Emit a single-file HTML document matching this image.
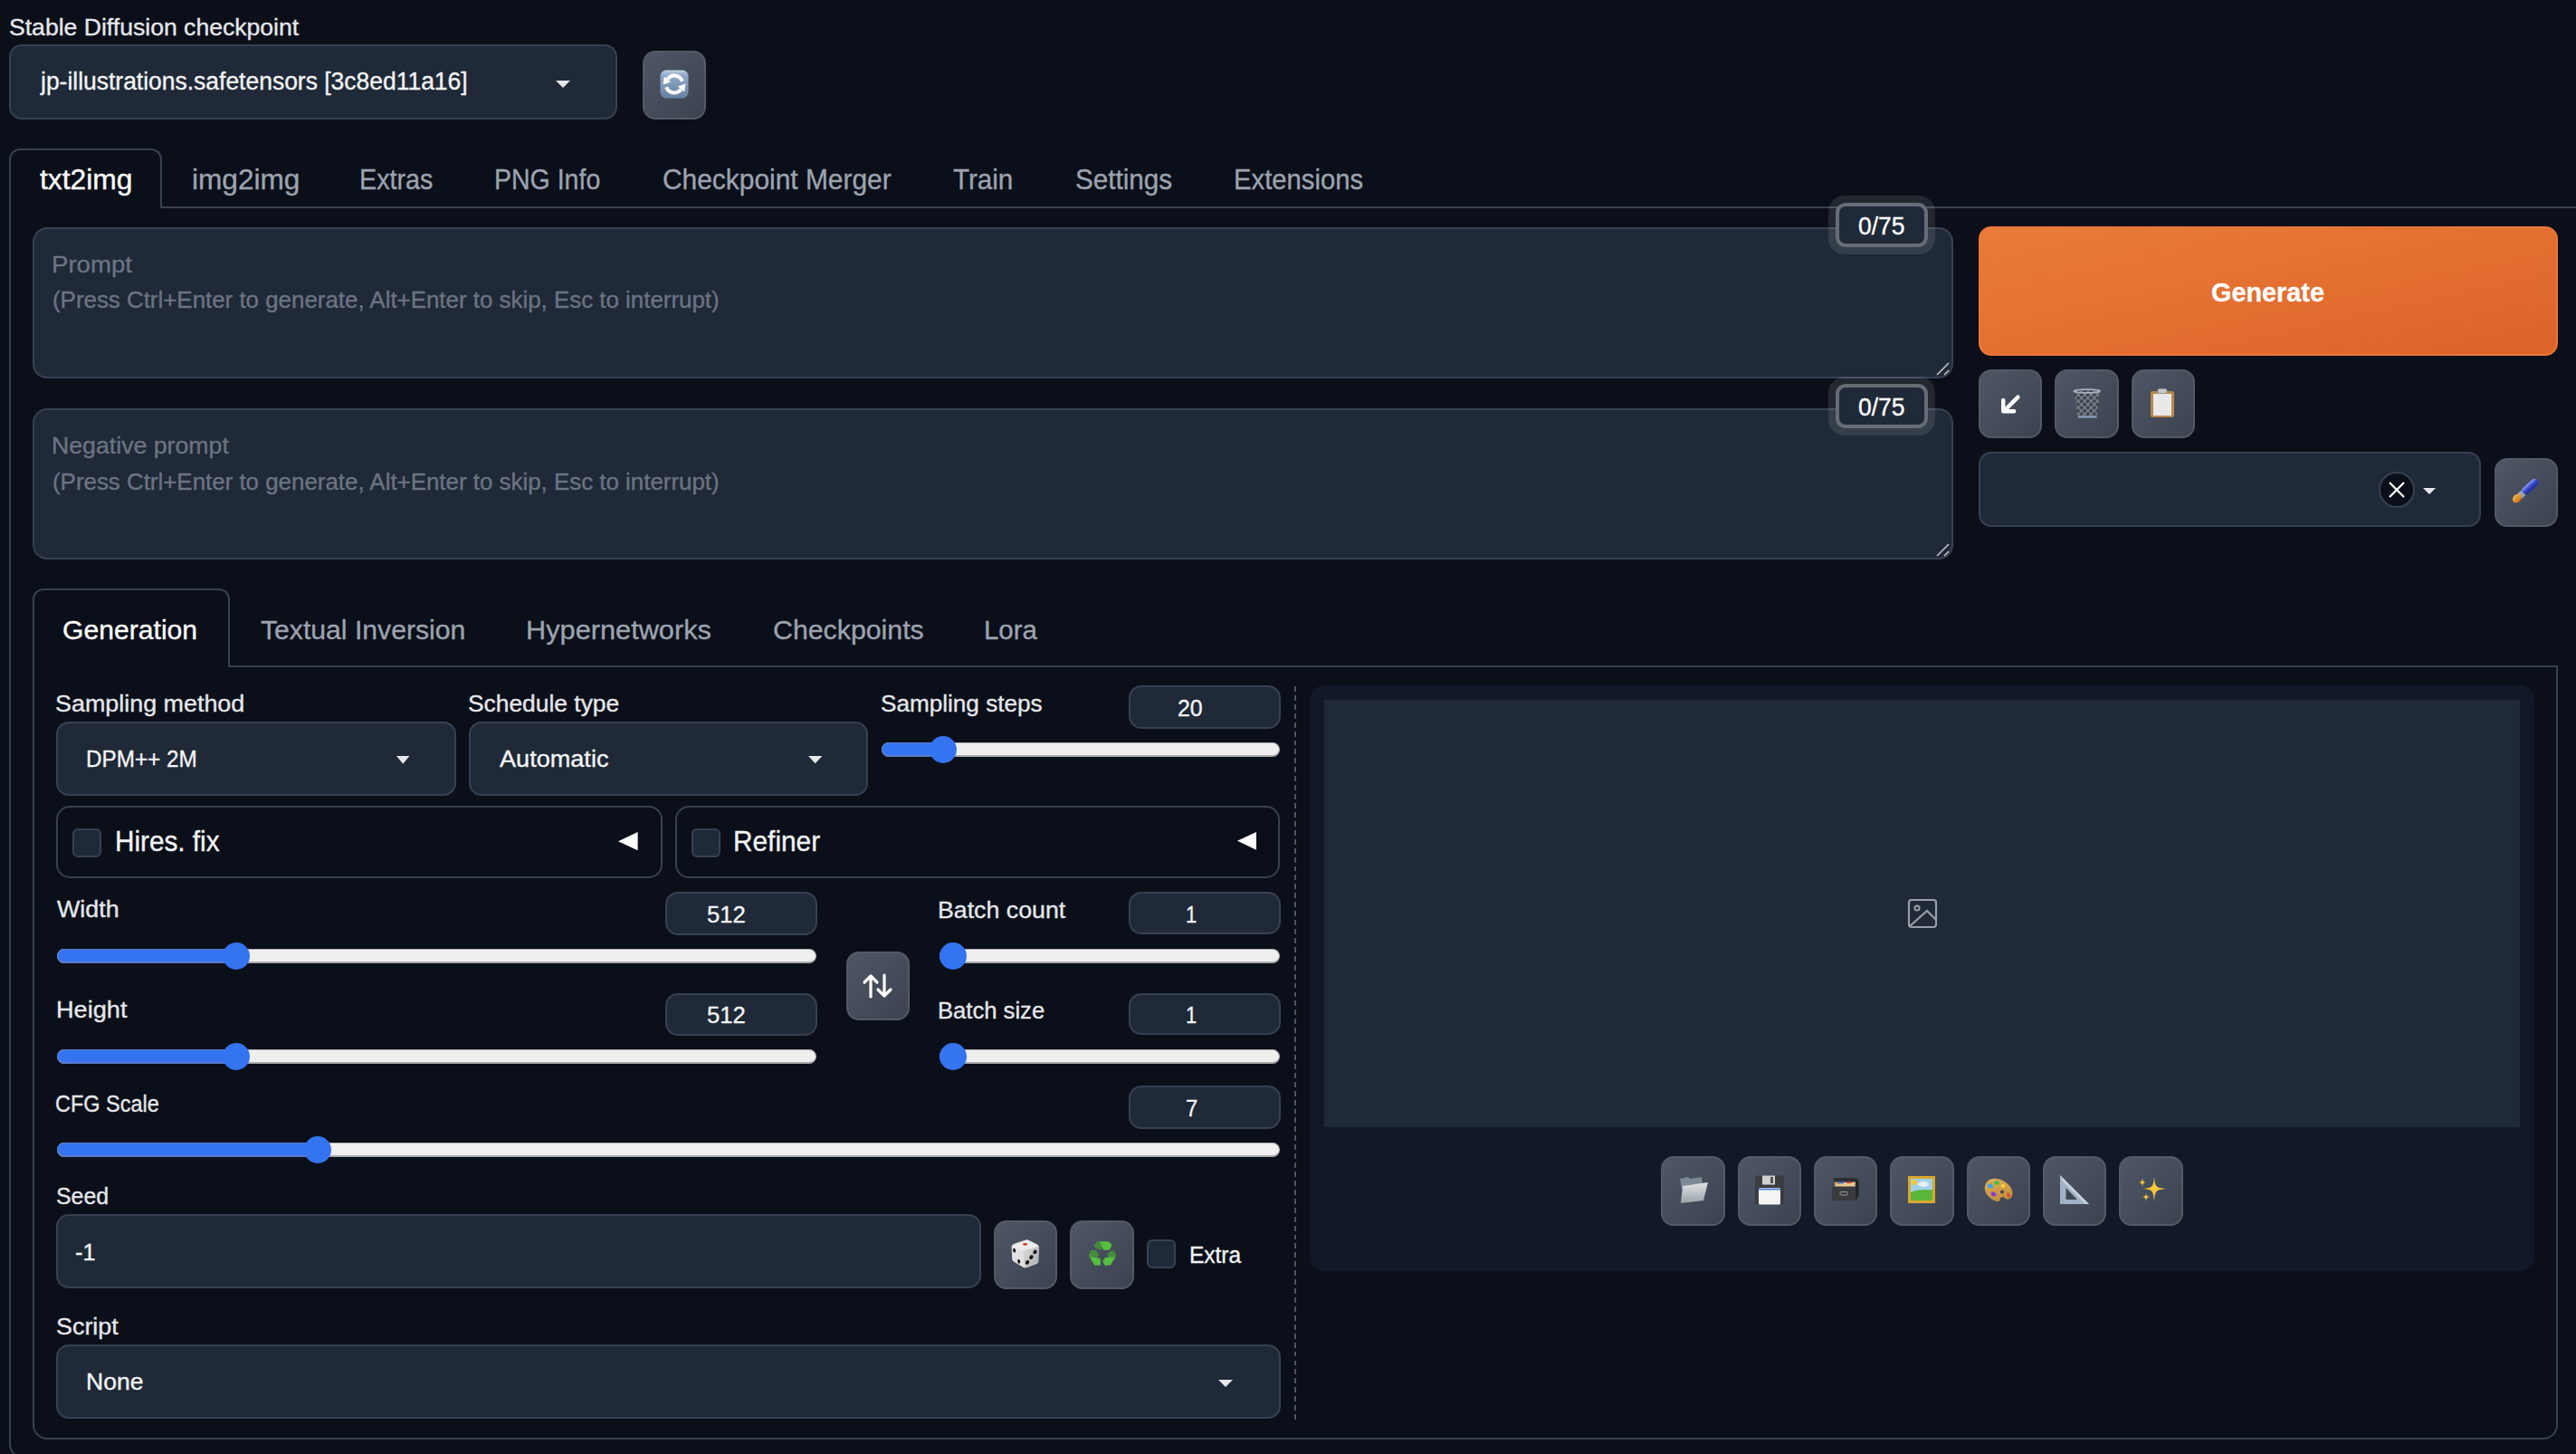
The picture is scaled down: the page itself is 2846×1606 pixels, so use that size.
<!DOCTYPE html>
<html><head><meta charset="utf-8"><title>Stable Diffusion</title>
<style>
html,body{margin:0;padding:0;background:#0b0f19;width:2846px;height:1606px;overflow:hidden;}
body{position:relative;font-family:"Liberation Sans",sans-serif;}
.a{position:absolute;box-sizing:border-box;}
.t{position:absolute;white-space:pre;line-height:1;-webkit-text-stroke:0.35px currentColor;}
</style></head><body>
<div class="t" id="t0" style="left:10.00px;top:16.57px;font-size:26.5px;color:#e5e7eb;transform:scaleX(1.0032);transform-origin:0 0;">Stable Diffusion checkpoint</div>
<div class="a" style="left:10.0px;top:49.0px;width:672.0px;height:82.5px;background:#1f2937;border:2px solid #374151;border-radius:14px;"></div>
<div class="t" id="t1" style="left:44.99px;top:77.31px;font-size:26.8px;color:#f3f4f6;transform:scaleX(0.9874);transform-origin:0 0;">jp-illustrations.safetensors [3c8ed11a16]</div>
<svg class="a" style="left:614.0px;top:89.0px" width="16" height="8" viewBox="0 0 16 8"><polygon points="0,0 16,0 8.0,8" fill="#e5e7eb"/></svg>
<div class="a" style="left:710.0px;top:56.0px;width:70.0px;height:76.0px;background:linear-gradient(to bottom right,#4f5665,#3b4250);border:2px solid #535a66;border-radius:14px;"></div>
<svg class="a" style="left:729.0px;top:77.0px" width="32" height="32" viewBox="0 0 32 32">
<defs><linearGradient id="rg" x1="0" y1="0" x2="0" y2="1"><stop offset="0" stop-color="#c3d2e4"/><stop offset="0.18" stop-color="#8fa8c8"/><stop offset="1" stop-color="#66829f"/></linearGradient></defs>
<rect x="0.5" y="0.5" width="31" height="31" rx="6.5" fill="url(#rg)"/>
<path d="M24.9 12.75 A9.5 9.5 0 0 0 8.6 10.2" stroke="#fff" stroke-width="4" fill="none"/>
<polygon points="3.6,16.6 4.8,7.4 12.2,13.6" fill="#fff"/>
<path d="M7.1 19.25 A9.5 9.5 0 0 0 23.4 21.8" stroke="#fff" stroke-width="4" fill="none"/>
<polygon points="28.4,15.4 19.8,18.4 27.2,24.6" fill="#fff"/>
</svg>
<div class="a" style="left:10.0px;top:228.0px;width:2890.0px;height:1383.0px;border:2px solid #374151;border-radius:0 0 16px 16px;"></div>
<div class="a" style="left:10.0px;top:164.0px;width:169.0px;height:66.0px;background:#0b0f19;border:2px solid #374151;border-radius:12px 12px 0 0;border-bottom:none;"></div>
<div class="t" id="t2" style="left:44.47px;top:183.48px;font-size:30.5px;color:#ffffff;transform:scaleX(1.0418);transform-origin:0 0;">txt2img</div>
<div class="t" id="t3" style="left:211.93px;top:183.48px;font-size:30.5px;color:#9ca3af;transform:scaleX(1.0357);transform-origin:0 0;">img2img</div>
<div class="t" id="t4" style="left:397.12px;top:183.48px;font-size:30.5px;color:#9ca3af;transform:scaleX(0.9406);transform-origin:0 0;">Extras</div>
<div class="t" id="t5" style="left:545.67px;top:183.48px;font-size:30.5px;color:#9ca3af;transform:scaleX(0.9346);transform-origin:0 0;">PNG Info</div>
<div class="t" id="t6" style="left:731.53px;top:183.48px;font-size:30.5px;color:#9ca3af;transform:scaleX(0.9805);transform-origin:0 0;">Checkpoint Merger</div>
<div class="t" id="t7" style="left:1052.51px;top:183.48px;font-size:30.5px;color:#9ca3af;transform:scaleX(0.9699);transform-origin:0 0;">Train</div>
<div class="t" id="t8" style="left:1188.04px;top:183.48px;font-size:30.5px;color:#9ca3af;transform:scaleX(0.9722);transform-origin:0 0;">Settings</div>
<div class="t" id="t9" style="left:1363.08px;top:183.48px;font-size:30.5px;color:#9ca3af;transform:scaleX(0.9590);transform-origin:0 0;">Extensions</div>
<div class="a" style="left:36.0px;top:250.5px;width:2122.0px;height:167.0px;background:#1f2937;border:2px solid #374151;border-radius:16px;"></div>
<div class="t" id="t10" style="left:56.88px;top:278.99px;font-size:26px;color:#6c7384;transform:scaleX(1.0611);transform-origin:0 0;">Prompt</div>
<div class="t" id="t11" style="left:57.98px;top:319.41px;font-size:25.5px;color:#6c7384;transform:scaleX(1.0152);transform-origin:0 0;">(Press Ctrl+Enter to generate, Alt+Enter to skip, Esc to interrupt)</div>
<svg class="a" style="left:2138.0px;top:399.5px" width="18" height="16" viewBox="0 0 18 16"><line x1="2" y1="14" x2="15" y2="1" stroke="#bfc3c9" stroke-width="1.6"/><line x1="10" y1="14" x2="15" y2="9" stroke="#bfc3c9" stroke-width="1.6"/></svg>
<div class="a" style="left:36.0px;top:451.0px;width:2122.0px;height:167.0px;background:#1f2937;border:2px solid #374151;border-radius:16px;"></div>
<div class="t" id="t12" style="left:56.95px;top:479.49px;font-size:26px;color:#6c7384;transform:scaleX(1.0265);transform-origin:0 0;">Negative prompt</div>
<div class="t" id="t13" style="left:57.98px;top:519.91px;font-size:25.5px;color:#6c7384;transform:scaleX(1.0152);transform-origin:0 0;">(Press Ctrl+Enter to generate, Alt+Enter to skip, Esc to interrupt)</div>
<svg class="a" style="left:2138.0px;top:600.0px" width="18" height="16" viewBox="0 0 18 16"><line x1="2" y1="14" x2="15" y2="1" stroke="#bfc3c9" stroke-width="1.6"/><line x1="10" y1="14" x2="15" y2="9" stroke="#bfc3c9" stroke-width="1.6"/></svg>
<div class="a" style="left:2020.0px;top:216.0px;width:118.0px;height:65.0px;background:rgba(255,255,255,0.1);border-radius:18px;"></div>
<div class="a" style="left:2028.0px;top:224.0px;width:102.0px;height:49.0px;background:#1f2937;border:4px solid #676d77;border-radius:11px;"></div>
<div class="t" id="t14" style="left:2053.02px;top:236.54px;font-size:27px;color:#ffffff;transform:scaleX(0.9804);transform-origin:0 0;">0/75</div>
<div class="a" style="left:2020.0px;top:416.0px;width:118.0px;height:65.0px;background:rgba(255,255,255,0.1);border-radius:18px;"></div>
<div class="a" style="left:2028.0px;top:424.0px;width:102.0px;height:49.0px;background:#1f2937;border:4px solid #676d77;border-radius:11px;"></div>
<div class="t" id="t15" style="left:2053.02px;top:436.54px;font-size:27px;color:#ffffff;transform:scaleX(0.9804);transform-origin:0 0;">0/75</div>
<div class="a" style="left:2186.0px;top:250.0px;width:640.0px;height:143.0px;background:linear-gradient(to bottom right,#e97c39,#dd6329);border:2px solid #e8773a;border-radius:14px;"></div>
<div class="t" id="t16" style="left:2443.04px;top:307.61px;font-size:30px;color:#ffffff;font-weight:bold;transform:scaleX(0.9610);transform-origin:0 0;">Generate</div>
<div class="a" style="left:2186.0px;top:408.0px;width:70.0px;height:76.0px;background:linear-gradient(to bottom right,#4f5665,#3b4250);border:2px solid #535a66;border-radius:14px;"></div>
<div class="a" style="left:2270.0px;top:408.0px;width:70.5px;height:76.0px;background:linear-gradient(to bottom right,#4f5665,#3b4250);border:2px solid #535a66;border-radius:14px;"></div>
<div class="a" style="left:2355.0px;top:408.0px;width:69.5px;height:76.0px;background:linear-gradient(to bottom right,#4f5665,#3b4250);border:2px solid #535a66;border-radius:14px;"></div>
<svg class="a" style="left:2207.0px;top:429.0px" width="30" height="30" viewBox="0 0 30 30"><path d="M22.4 9.6 L7.5 24.5" stroke="#fff" stroke-width="4.4" stroke-linecap="round"/><path d="M6.2 13 L6.2 25.2 L18.2 25.2" stroke="#fff" stroke-width="4.4" fill="none" stroke-linecap="round" stroke-linejoin="round"/></svg>
<svg class="a" style="left:2289.0px;top:429.0px" width="34" height="34" viewBox="0 0 34 34">
<defs><pattern id="mesh" width="5" height="5" patternUnits="userSpaceOnUse" patternTransform="rotate(45)"><rect width="5" height="5" fill="none" stroke="#8d959e" stroke-width="1.1"/></pattern></defs>
<path d="M2.5 3 L31 3 L27.5 32 L6.5 32 Z" fill="#3a414c"/>
<path d="M2.5 3 L31 3 L27.5 32 L6.5 32 Z" fill="url(#mesh)"/>
<ellipse cx="16.7" cy="3" rx="14.3" ry="1.8" fill="none" stroke="#a9b2bc" stroke-width="1.8"/>
<path d="M6.5 31.5 L27.5 31.5" stroke="#8fa6c2" stroke-width="2"/>
</svg>
<svg class="a" style="left:2374.0px;top:428.0px" width="30" height="34" viewBox="0 0 30 34">
<rect x="2" y="4" width="26" height="29" rx="2" fill="#b9874e"/>
<rect x="5" y="7" width="20" height="24" fill="#e9e9e9"/>
<rect x="10" y="1.5" width="10" height="5" rx="1.5" fill="#c7c9cc" stroke="#8e9196" stroke-width="1"/>
</svg>
<div class="a" style="left:2186.0px;top:499.0px;width:555.0px;height:82.5px;background:#1f2937;border:2px solid #374151;border-radius:14px;"></div>
<div class="a" style="left:2628.0px;top:521.0px;width:40.0px;height:40.0px;background:#0b0f19;border:2px solid #374151;border-radius:50%;"></div>
<svg class="a" style="left:2638.0px;top:531.0px" width="20" height="20" viewBox="0 0 20 20"><path d="M2 2 L18 18 M18 2 L2 18" stroke="#fff" stroke-width="2.3"/></svg>
<svg class="a" style="left:2676.5px;top:539.0px" width="14.0" height="7" viewBox="0 0 14.0 7"><polygon points="0,0 14.0,0 7.0,7" fill="#e5e7eb"/></svg>
<div class="a" style="left:2756.0px;top:506.0px;width:70.0px;height:75.5px;background:linear-gradient(to bottom right,#4f5665,#3b4250);border:2px solid #535a66;border-radius:14px;"></div>
<svg class="a" style="left:2772.0px;top:524.0px" width="36" height="36" viewBox="0 0 36 36">
<defs><linearGradient id="bg1" x1="0" y1="0" x2="0" y2="1"><stop offset="0" stop-color="#8fa0ff"/><stop offset="0.5" stop-color="#3346c8"/><stop offset="1" stop-color="#1d2a8a"/></linearGradient>
<linearGradient id="bg2" x1="0" y1="0" x2="0" y2="1"><stop offset="0" stop-color="#f5b54a"/><stop offset="1" stop-color="#c8741c"/></linearGradient></defs>
<g transform="rotate(-42 18 18)">
<rect x="14" y="14" width="22" height="8.5" rx="4.2" fill="url(#bg1)"/>
<rect x="9" y="14.6" width="6" height="7.3" fill="#9a9ea4"/>
<ellipse cx="5.5" cy="18.2" rx="5.5" ry="4.3" fill="url(#bg2)"/>
</g>
</svg>
<div class="a" style="left:36.0px;top:735.0px;width:2790.0px;height:855.0px;border:2px solid #374151;border-radius:0 0 16px 16px;"></div>
<div class="a" style="left:36.0px;top:650.0px;width:218.0px;height:86.5px;background:#0b0f19;border:2px solid #374151;border-radius:12px 12px 0 0;border-bottom:none;"></div>
<div class="t" id="t17" style="left:69.41px;top:680.65px;font-size:30.3px;color:#ffffff;transform:scaleX(0.9946);transform-origin:0 0;">Generation</div>
<div class="t" id="t18" style="left:287.60px;top:680.65px;font-size:30.3px;color:#9ca3af;transform:scaleX(0.9956);transform-origin:0 0;">Textual Inversion</div>
<div class="t" id="t19" style="left:580.97px;top:680.65px;font-size:30.3px;color:#9ca3af;transform:scaleX(1.0141);transform-origin:0 0;">Hypernetworks</div>
<div class="t" id="t20" style="left:854.00px;top:680.65px;font-size:30.3px;color:#9ca3af;">Checkpoints</div>
<div class="t" id="t21" style="left:1087.48px;top:680.65px;font-size:30.3px;color:#9ca3af;transform:scaleX(0.9697);transform-origin:0 0;">Lora</div>
<div class="t" id="t22" style="left:61.48px;top:763.57px;font-size:26.5px;color:#e5e7eb;transform:scaleX(1.0148);transform-origin:0 0;">Sampling method</div>
<div class="a" style="left:62.0px;top:796.5px;width:442.0px;height:82.0px;background:#1f2937;border:2px solid #374151;border-radius:14px;"></div>
<div class="t" id="t23" style="left:95.17px;top:824.57px;font-size:26.5px;color:#f3f4f6;transform:scaleX(0.9154);transform-origin:0 0;">DPM++ 2M</div>
<svg class="a" style="left:437.5px;top:835.0px" width="14.5" height="8.799999999999955" viewBox="0 0 14.5 8.799999999999955"><polygon points="0,0 14.5,0 7.25,8.799999999999955" fill="#e5e7eb"/></svg>
<div class="t" id="t24" style="left:517.00px;top:763.57px;font-size:26.5px;color:#e5e7eb;transform:scaleX(0.9952);transform-origin:0 0;">Schedule type</div>
<div class="a" style="left:518.0px;top:796.5px;width:441.0px;height:82.0px;background:#1f2937;border:2px solid #374151;border-radius:14px;"></div>
<div class="t" id="t25" style="left:552.00px;top:824.57px;font-size:26.5px;color:#f3f4f6;transform:scaleX(1.0223);transform-origin:0 0;">Automatic</div>
<svg class="a" style="left:892.8px;top:835.3px" width="15.400000000000091" height="8.300000000000068" viewBox="0 0 15.400000000000091 8.300000000000068"><polygon points="0,0 15.400000000000091,0 7.7000000000000455,8.300000000000068" fill="#e5e7eb"/></svg>
<div class="t" id="t26" style="left:972.82px;top:763.57px;font-size:26.5px;color:#e5e7eb;transform:scaleX(0.9855);transform-origin:0 0;">Sampling steps</div>
<div class="a" style="left:1247.0px;top:757.4px;width:168.0px;height:47.2px;background:#1f2937;border:2px solid #374151;border-radius:14px;"></div>
<div class="t" id="t27" style="left:1301.43px;top:768.99px;font-size:26px;color:#f3f4f6;transform:scaleX(0.9570);transform-origin:0 0;">20</div>
<div class="a" style="left:974.0px;top:820.0px;width:440.0px;height:16.0px;background:#efefef;border:1px solid #ababab;border-radius:8px;border-bottom-width:2px;"></div>
<div class="a" style="left:974.0px;top:820.0px;width:68.0px;height:16.0px;background:#3574f0;border:1px solid #5b7ccc;border-radius:8px;border-bottom-width:2px;"></div>
<div class="a" style="left:1027.0px;top:813.0px;width:30.0px;height:30.0px;background:#3574f0;border-radius:50%;"></div>
<div class="a" style="left:62.0px;top:889.8px;width:669.5px;height:80.0px;border:2px solid #374151;border-radius:15px;"></div>
<div class="a" style="left:80.0px;top:915.0px;width:32.0px;height:32.0px;background:#1f2937;border:2px solid #374151;border-radius:6px;"></div>
<div class="t" id="t28" style="left:127.05px;top:914.18px;font-size:30.5px;color:#f3f4f6;transform:scaleX(0.9742);transform-origin:0 0;">Hires. fix</div>
<svg class="a" style="left:683.4px;top:919.0px" width="21.600000000000023" height="20.299999999999955" viewBox="0 0 21.600000000000023 20.299999999999955"><polygon points="0,10.149999999999977 21.600000000000023,0 21.600000000000023,20.299999999999955" fill="#ffffff"/></svg>
<div class="a" style="left:746.3px;top:889.8px;width:667.7px;height:80.0px;border:2px solid #374151;border-radius:15px;"></div>
<div class="a" style="left:764.0px;top:915.0px;width:32.0px;height:32.0px;background:#1f2937;border:2px solid #374151;border-radius:6px;"></div>
<div class="t" id="t29" style="left:810.36px;top:914.18px;font-size:30.5px;color:#f3f4f6;transform:scaleX(0.9771);transform-origin:0 0;">Refiner</div>
<svg class="a" style="left:1367.0px;top:919.3px" width="21" height="19.700000000000045" viewBox="0 0 21 19.700000000000045"><polygon points="0,9.850000000000023 21,0 21,19.700000000000045" fill="#ffffff"/></svg>
<div class="t" id="t30" style="left:62.58px;top:991.37px;font-size:26.5px;color:#e5e7eb;transform:scaleX(1.0124);transform-origin:0 0;">Width</div>
<div class="a" style="left:735.2px;top:985.2px;width:167.4px;height:47.6px;background:#1f2937;border:2px solid #374151;border-radius:14px;"></div>
<div class="t" id="t31" style="left:781.33px;top:997.24px;font-size:26.3px;color:#f3f4f6;transform:scaleX(0.9762);transform-origin:0 0;">512</div>
<div class="a" style="left:63.0px;top:1048.0px;width:839.0px;height:16.0px;background:#efefef;border:1px solid #ababab;border-radius:8px;border-bottom-width:2px;"></div>
<div class="a" style="left:63.0px;top:1048.0px;width:198.0px;height:16.0px;background:#3574f0;border:1px solid #5b7ccc;border-radius:8px;border-bottom-width:2px;"></div>
<div class="a" style="left:246.0px;top:1041.0px;width:30.0px;height:30.0px;background:#3574f0;border-radius:50%;"></div>
<div class="t" id="t32" style="left:61.56px;top:1102.27px;font-size:26.5px;color:#e5e7eb;transform:scaleX(1.0242);transform-origin:0 0;">Height</div>
<div class="a" style="left:735.2px;top:1096.5px;width:167.4px;height:47.0px;background:#1f2937;border:2px solid #374151;border-radius:14px;"></div>
<div class="t" id="t33" style="left:781.33px;top:1108.24px;font-size:26.3px;color:#f3f4f6;transform:scaleX(0.9762);transform-origin:0 0;">512</div>
<div class="a" style="left:63.0px;top:1159.0px;width:839.0px;height:16.0px;background:#efefef;border:1px solid #ababab;border-radius:8px;border-bottom-width:2px;"></div>
<div class="a" style="left:63.0px;top:1159.0px;width:198.0px;height:16.0px;background:#3574f0;border:1px solid #5b7ccc;border-radius:8px;border-bottom-width:2px;"></div>
<div class="a" style="left:246.0px;top:1152.0px;width:30.0px;height:30.0px;background:#3574f0;border-radius:50%;"></div>
<div class="a" style="left:935.0px;top:1051.0px;width:70.0px;height:76.0px;background:linear-gradient(to bottom right,#4f5665,#3b4250);border:2px solid #535a66;border-radius:14px;"></div>
<svg class="a" style="left:952.0px;top:1074.0px" width="36" height="30" viewBox="0 0 36 30"><path d="M10 27 L10 4 M3 11 L10 4 L17 11" stroke="#fff" stroke-width="3.2" fill="none" stroke-linecap="round" stroke-linejoin="round"/><path d="M25 3 L25 26 M18 19 L25 26 L32 19" stroke="#fff" stroke-width="3.2" fill="none" stroke-linecap="round" stroke-linejoin="round"/></svg>
<div class="t" id="t34" style="left:1036.08px;top:991.77px;font-size:26.5px;color:#e5e7eb;transform:scaleX(1.0087);transform-origin:0 0;">Batch count</div>
<div class="a" style="left:1247.0px;top:985.2px;width:167.6px;height:47.3px;background:#1f2937;border:2px solid #374151;border-radius:14px;"></div>
<div class="t" id="t35" style="left:1310.21px;top:996.74px;font-size:26.3px;color:#f3f4f6;transform:scaleX(0.8316);transform-origin:0 0;">1</div>
<div class="a" style="left:1038.0px;top:1048.0px;width:376.0px;height:16.0px;background:#efefef;border:1px solid #ababab;border-radius:8px;border-bottom-width:2px;"></div>
<div class="a" style="left:1038.0px;top:1048.0px;width:15.0px;height:16.0px;background:#3574f0;border:1px solid #5b7ccc;border-radius:8px;border-bottom-width:2px;"></div>
<div class="a" style="left:1038.0px;top:1041.0px;width:30.0px;height:30.0px;background:#3574f0;border-radius:50%;"></div>
<div class="t" id="t36" style="left:1036.17px;top:1103.07px;font-size:26.5px;color:#e5e7eb;transform:scaleX(0.9665);transform-origin:0 0;">Batch size</div>
<div class="a" style="left:1247.0px;top:1096.6px;width:167.6px;height:46.9px;background:#1f2937;border:2px solid #374151;border-radius:14px;"></div>
<div class="t" id="t37" style="left:1310.21px;top:1107.74px;font-size:26.3px;color:#f3f4f6;transform:scaleX(0.8316);transform-origin:0 0;">1</div>
<div class="a" style="left:1038.0px;top:1159.0px;width:376.0px;height:16.0px;background:#efefef;border:1px solid #ababab;border-radius:8px;border-bottom-width:2px;"></div>
<div class="a" style="left:1038.0px;top:1159.0px;width:15.0px;height:16.0px;background:#3574f0;border:1px solid #5b7ccc;border-radius:8px;border-bottom-width:2px;"></div>
<div class="a" style="left:1038.0px;top:1152.0px;width:30.0px;height:30.0px;background:#3574f0;border-radius:50%;"></div>
<div class="t" id="t38" style="left:61.33px;top:1205.67px;font-size:26.5px;color:#e5e7eb;transform:scaleX(0.8860);transform-origin:0 0;">CFG Scale</div>
<div class="a" style="left:1247.3px;top:1199.3px;width:167.7px;height:47.7px;background:#1f2937;border:2px solid #374151;border-radius:14px;"></div>
<div class="t" id="t39" style="left:1309.66px;top:1211.04px;font-size:26.3px;color:#f3f4f6;transform:scaleX(0.9074);transform-origin:0 0;">7</div>
<div class="a" style="left:63.0px;top:1262.0px;width:1351.0px;height:16.0px;background:#efefef;border:1px solid #ababab;border-radius:8px;border-bottom-width:2px;"></div>
<div class="a" style="left:63.0px;top:1262.0px;width:288.0px;height:16.0px;background:#3574f0;border:1px solid #5b7ccc;border-radius:8px;border-bottom-width:2px;"></div>
<div class="a" style="left:336.0px;top:1255.0px;width:30.0px;height:30.0px;background:#3574f0;border-radius:50%;"></div>
<div class="t" id="t40" style="left:61.90px;top:1308.37px;font-size:26.5px;color:#e5e7eb;transform:scaleX(0.9391);transform-origin:0 0;">Seed</div>
<div class="a" style="left:62.0px;top:1341.2px;width:1022.0px;height:82.3px;background:#1f2937;border:2px solid #374151;border-radius:14px;"></div>
<div class="t" id="t41" style="left:83.29px;top:1370.19px;font-size:26px;color:#f3f4f6;transform:scaleX(0.9748);transform-origin:0 0;">-1</div>
<div class="a" style="left:1098.2px;top:1348.0px;width:69.5px;height:75.5px;background:linear-gradient(to bottom right,#4f5665,#3b4250);border:2px solid #535a66;border-radius:14px;"></div>
<div class="a" style="left:1182.2px;top:1348.0px;width:70.6px;height:75.5px;background:linear-gradient(to bottom right,#4f5665,#3b4250);border:2px solid #535a66;border-radius:14px;"></div>
<svg class="a" style="left:1110.0px;top:1362.0px" width="48" height="46" viewBox="0 0 48 46">
<defs><linearGradient id="dr" x1="0" y1="0" x2="1" y2="1"><stop offset="0" stop-color="#dedede"/><stop offset="1" stop-color="#adadad"/></linearGradient></defs>
<path d="M7.6 14.5 Q8 13 10 12 L23 7.6 Q24.7 7 26.5 7.8 L36 12.6 Q38 14 37.8 16 L37.2 31.5 Q37 33.2 35 34 L24.5 38 Q22.5 38.8 20.5 37.8 L10 31.5 Q8.3 30.5 8.2 28.5 Z" fill="#e2e2e2"/>
<path d="M7.8 14.8 L24.7 8 L37.6 14.8 L20 19.6 Z" fill="#ececec"/>
<path d="M20 19.6 L37.6 14.8 L37.1 32.5 L22.5 38.2 Z" fill="url(#dr)"/>
<ellipse cx="22.5" cy="12.3" rx="2.6" ry="1.4" fill="#d9312b"/>
<ellipse cx="10.6" cy="19.2" rx="1.5" ry="2.4" transform="rotate(-15 10.6 19.2)" fill="#151515"/>
<ellipse cx="15.7" cy="31.3" rx="1.5" ry="2.4" transform="rotate(-15 15.7 31.3)" fill="#151515"/>
<ellipse cx="33.5" cy="20.9" rx="2" ry="2.5" transform="rotate(35 33.5 20.9)" fill="#151515"/>
<ellipse cx="29.4" cy="26.6" rx="2" ry="2.5" transform="rotate(35 29.4 26.6)" fill="#151515"/>
<ellipse cx="25" cy="32.4" rx="2" ry="2.5" transform="rotate(35 25 32.4)" fill="#151515"/>
</svg>
<svg class="a" style="left:1195.0px;top:1362.0px" width="48" height="46" viewBox="0 0 48 46">
<g fill="#55bf3f">
<path d="M13.6 14.4 L17.1 9.2 L29.7 9.2 L33.7 13.3 L30.4 18.7 L24.1 18.8 L22.5 15.5 L20.6 18.7 Z"/>
<path d="M7.9 24.4 L10.1 19 L15.8 19 L18.7 23.6 L16.5 27.2 L20.6 27.8 L20.9 35.4 L14.2 35.4 Z"/>
<path d="M23.1 31.3 L26.6 25.9 L26.9 27.5 L29.7 26.6 L28.5 22.8 L34.8 19 L38.3 24.4 L32 35.4 L26.9 35.4 L26.6 37 Z"/>
</g>
<g fill="#468a3e">
<path d="M13.6 14.4 L17.1 9.2 L20.5 9.2 L22.5 15.5 L20.6 18.7 Z"/>
<path d="M7.9 24.4 L10.1 19 L15.8 19 L18.7 23.6 L16.5 27.2 L10.4 26.6 Z"/>
<path d="M28.5 22.8 L34.8 19 L38.3 24.4 L37.3 26.2 L30 26.6 Z"/>
</g>
</svg>
<div class="a" style="left:1267.0px;top:1369.0px;width:32.0px;height:32.0px;background:#1f2937;border:2px solid #374151;border-radius:6px;"></div>
<div class="t" id="t42" style="left:1314.15px;top:1372.87px;font-size:26.5px;color:#f3f4f6;transform:scaleX(0.9238);transform-origin:0 0;">Extra</div>
<div class="t" id="t43" style="left:61.99px;top:1451.57px;font-size:26.5px;color:#e5e7eb;transform:scaleX(1.0149);transform-origin:0 0;">Script</div>
<div class="a" style="left:62.0px;top:1484.5px;width:1352.6px;height:82.8px;background:#1f2937;border:2px solid #374151;border-radius:14px;"></div>
<div class="t" id="t44" style="left:95.00px;top:1512.57px;font-size:26.5px;color:#f3f4f6;transform:scaleX(1.0003);transform-origin:0 0;">None</div>
<svg class="a" style="left:1346.0px;top:1524.0px" width="16" height="8" viewBox="0 0 16 8"><polygon points="0,0 16,0 8.0,8" fill="#e5e7eb"/></svg>
<div class="a" style="left:1430px;top:758px;width:2px;height:810px;background:repeating-linear-gradient(to bottom,#4b5563 0 5.9px,transparent 5.9px 9.927px);"></div>
<div class="a" style="left:1447.0px;top:757.0px;width:1353.0px;height:647.0px;background:#111827;border-radius:16px;"></div>
<div class="a" style="left:1463.0px;top:773.0px;width:1321.0px;height:472.0px;background:#1f2937;"></div>
<svg class="a" style="left:2107.0px;top:992.0px" width="34" height="34" viewBox="0 0 34 34"><rect x="2" y="2" width="30" height="30" rx="3" fill="none" stroke="#999ea7" stroke-width="2.2"/><circle cx="11" cy="11" r="2.6" fill="none" stroke="#999ea7" stroke-width="2"/><path d="M3 31 L22 14 L32 24" fill="none" stroke="#999ea7" stroke-width="2.2"/></svg>
<div class="a" style="left:1835.0px;top:1277.0px;width:71.0px;height:77.0px;background:linear-gradient(to bottom right,#4f5665,#3b4250);border:2px solid #535a66;border-radius:14px;"></div>
<div class="a" style="left:1920.0px;top:1277.0px;width:70.0px;height:77.0px;background:linear-gradient(to bottom right,#4f5665,#3b4250);border:2px solid #535a66;border-radius:14px;"></div>
<div class="a" style="left:2004.0px;top:1277.0px;width:70.0px;height:77.0px;background:linear-gradient(to bottom right,#4f5665,#3b4250);border:2px solid #535a66;border-radius:14px;"></div>
<div class="a" style="left:2088.0px;top:1277.0px;width:71.0px;height:77.0px;background:linear-gradient(to bottom right,#4f5665,#3b4250);border:2px solid #535a66;border-radius:14px;"></div>
<div class="a" style="left:2173.0px;top:1277.0px;width:70.0px;height:77.0px;background:linear-gradient(to bottom right,#4f5665,#3b4250);border:2px solid #535a66;border-radius:14px;"></div>
<div class="a" style="left:2257.0px;top:1277.0px;width:70.0px;height:77.0px;background:linear-gradient(to bottom right,#4f5665,#3b4250);border:2px solid #535a66;border-radius:14px;"></div>
<div class="a" style="left:2341.0px;top:1277.0px;width:71.0px;height:77.0px;background:linear-gradient(to bottom right,#4f5665,#3b4250);border:2px solid #535a66;border-radius:14px;"></div>
<svg class="a" style="left:1854.0px;top:1298.0px" width="34" height="32" viewBox="0 0 34 32">
<defs><linearGradient id="fg" x1="0" y1="0" x2="0" y2="1"><stop offset="0" stop-color="#dfe3e6"/><stop offset="1" stop-color="#9aa3aa"/></linearGradient></defs>
<path d="M2 4 L11 2 L13 4 L26 2 L27 11 L4 15 Z" fill="#7e8b96"/>
<path d="M5 12 L33 8 L28 28 L3 31 Z" fill="url(#fg)"/>
</svg>
<svg class="a" style="left:1938.0px;top:1298.0px" width="34" height="33" viewBox="0 0 34 33">
<rect x="1" y="0.5" width="32" height="32" rx="1.5" fill="#3c3d40"/>
<rect x="9" y="0.5" width="14" height="10" fill="#d0d0d0"/><rect x="18" y="2" width="3" height="7" fill="#555"/>
<rect x="5" y="14" width="24" height="18.5" rx="1.5" fill="#f4f4f4"/><rect x="5" y="14.5" width="24" height="2" fill="#5b8ad6"/>
</svg>
<svg class="a" style="left:2022.0px;top:1300.0px" width="34" height="28" viewBox="0 0 34 28">
<path d="M3 1.5 L29 1 L31.5 4 L31.5 21 L28 26 L28 9 Z" fill="#232427"/>
<path d="M3 1.5 L29 1 L31 4.5 L5 5 Z" fill="#2e2f33"/>
<path d="M5 6 L28 5.5 L27.5 11 L5.5 11 Z" fill="#e6c792"/>
<rect x="9" y="5.2" width="6" height="2" fill="#3b66c4"/><rect x="18" y="5" width="6" height="2" fill="#c8453a"/><rect x="5.5" y="6.5" width="4" height="1.5" fill="#e08a3a"/>
<rect x="2" y="10.5" width="26" height="15.5" rx="1" fill="#3a3b3f"/>
<rect x="11" y="16.5" width="8" height="3.5" rx="1" fill="none" stroke="#9a9a9a" stroke-width="1"/>
</svg>
<svg class="a" style="left:2107.0px;top:1298.0px" width="32" height="32" viewBox="0 0 32 32">
<rect x="1" y="1" width="30" height="30" fill="#d9a82c"/>
<rect x="4" y="4" width="24" height="24" fill="#9fd2ee"/>
<path d="M4 19 C12 15 20 17 28 16 L28 28 L4 28 Z" fill="#5bb53a"/>
<circle cx="8" cy="8" r="3" fill="#f4c73b"/>
<ellipse cx="18" cy="10" rx="6" ry="3" fill="#e8eef2"/>
</svg>
<svg class="a" style="left:2189.0px;top:1299.0px" width="38" height="32" viewBox="0 0 38 32">
<defs><linearGradient id="pg" x1="0" y1="0" x2="1" y2="1"><stop offset="0" stop-color="#e2b35c"/><stop offset="1" stop-color="#b98532"/></linearGradient></defs>
<g transform="rotate(28 19 16)">
<path d="M3 16 C3 8 11 4 19 4 C28 4 35 9 35 15 C35 19 32 21 29 20 C26 19 24 21 25 24 C26 27 23 28 19 28 C10 28 3 23 3 16 Z" fill="url(#pg)"/>
</g>
<ellipse cx="10" cy="11" rx="3.2" ry="2.4" transform="rotate(30 10 11)" fill="#39a7e8"/>
<ellipse cx="17" cy="7.5" rx="2.6" ry="2.2" fill="#3fbf3a"/>
<ellipse cx="24" cy="11" rx="2.4" ry="2" fill="#f1d23a"/>
<ellipse cx="13.5" cy="20" rx="3" ry="2.3" transform="rotate(30 13.5 20)" fill="#8a3ad2"/>
<ellipse cx="30" cy="21" rx="1.8" ry="2.6" transform="rotate(-20 30 21)" fill="#e2473a"/>
<circle cx="23" cy="17.5" r="1.9" fill="#3d4452"/>
</svg>
<svg class="a" style="left:2275.0px;top:1297.0px" width="34" height="34" viewBox="0 0 34 34"><path d="M1 1 L33 33 L1 33 Z" fill="#a3b1c5"/><path d="M1 1 L33 33 L29 33 L3 7 Z" fill="#c3cfdc"/><path d="M7.5 15 L20 28 L7.5 28 Z" fill="#414855"/></svg>
<svg class="a" style="left:2361.0px;top:1299.0px" width="32" height="32" viewBox="0 0 32 32">
<path d="M19 1 C20 12 21 13 32 14 C21 15 20 16 19 28 C18 16 17 15 7 14 C17 13 18 12 19 1 Z" fill="#f6c83a"/>
<path d="M6 2 C6.5 6 7 6.5 10 7 C7 7.5 6.5 8 6 12 C5.5 8 5 7.5 2 7 C5 6.5 5.5 6 6 2 Z" fill="#f6c83a"/>
<path d="M10 19 C10.5 22 11 22.5 14 23 C11 23.5 10.5 24 10 28 C9.5 24 9 23.5 6 23 C9 22.5 9.5 22 10 19 Z" fill="#f6c83a"/>
</svg>
</body></html>
